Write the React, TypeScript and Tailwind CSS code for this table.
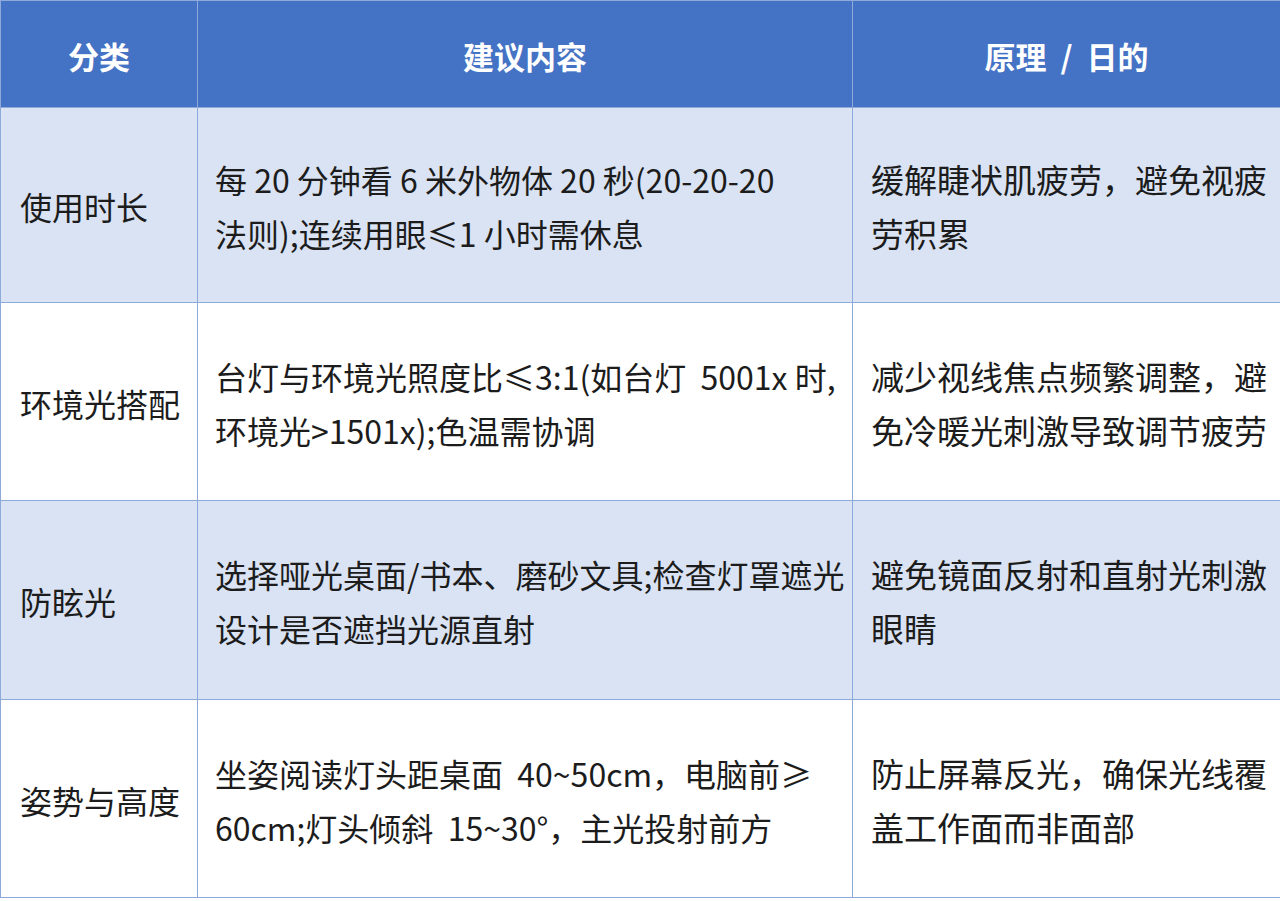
const rows = [
  {
    cat: '使用时长',
    tip: ['每 20 分钟看 6 米外物体 20 秒(20-20-20', '法则);连续用眼≤1 小时需休息'],
    why: ['缓解睫状肌疲劳，避免视疲', '劳积累'],
    h: 'h-[195px]',
    bg: 'bg-[#dae3f3]',
  },
  {
    cat: '环境光搭配',
    tip: ['台灯与环境光照度比≤3:1(如台灯  5001x 时,', '环境光>1501x);色温需协调'],
    why: ['减少视线焦点频繁调整，避', '免冷暖光刺激导致调节疲劳'],
    h: 'h-[198px]',
    bg: 'bg-white',
  },
  {
    cat: '防眩光',
    tip: ['选择哑光桌面/书本、磨砂文具;检查灯罩遮光', '设计是否遮挡光源直射'],
    why: ['避免镜面反射和直射光刺激', '眼睛'],
    h: 'h-[199px]',
    bg: 'bg-[#dae3f3]',
  },
  {
    cat: '姿势与高度',
    tip: ['坐姿阅读灯头距桌面  40~50cm，电脑前≥', '60cm;灯头倾斜  15~30°，主光投射前方'],
    why: ['防止屏幕反光，确保光线覆', '盖工作面而非面部'],
    h: 'h-[198px]',
    bg: 'bg-white',
  },
]

export default function App() {
  return (
    <div className="w-[1280px] h-[901px] bg-white font-['Noto_Sans_CJK_SC',sans-serif] text-[#1c1c1c]">
      <table className="w-[1280px] table-fixed border-collapse">
        <colgroup>
          <col className="w-[197px]" />
          <col className="w-[655px]" />
          <col className="w-[428px]" />
        </colgroup>
        <thead>
          <tr className="h-[107px] bg-[#4472c4] text-white text-[31px] font-black">
            <th className="border border-[#8eaadb] pt-[4px] text-center">分类</th>
            <th className="border border-[#8eaadb] pt-[4px] text-center">建议内容</th>
            <th className="border border-[#8eaadb] pt-[4px] text-center">原理&nbsp;&nbsp;/&nbsp;&nbsp;日的</th>
          </tr>
        </thead>
        <tbody>
          {rows.map((r) => (
            <tr key={r.cat} className={`${r.h} ${r.bg} text-[32px] leading-[54px]`}>
              <td className="border border-[#8eaadb] pl-[19px] pt-[2px] align-middle whitespace-nowrap">{r.cat}</td>
              <td className="border border-[#8eaadb] pl-[17px] pt-[2px] align-middle whitespace-pre">
                {r.tip[0]}
                <br />
                {r.tip[1]}
              </td>
              <td className="border border-[#8eaadb] pl-[18px] pt-[2px] align-middle whitespace-pre text-[33px]">
                {r.why[0]}
                <br />
                {r.why[1]}
              </td>
            </tr>
          ))}
        </tbody>
      </table>
    </div>
  )
}
